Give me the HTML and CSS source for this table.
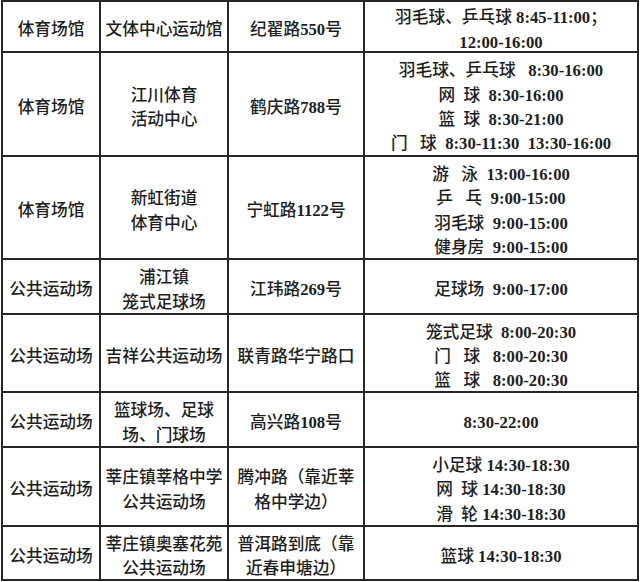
FILE: index.html
```html
<!DOCTYPE html>
<html lang="zh-CN">
<head>
<meta charset="utf-8">
<title>体育场馆开放时间</title>
<link rel="stylesheet" href="styles.css">
</head>
<body>
<table class="venues">
  <colgroup>
    <col class="c-type">
    <col class="c-name">
    <col class="c-addr">
    <col class="c-time">
  </colgroup>
  <tbody>
    <tr class="r1">
      <td><div class="cell">体育场馆</div></td>
      <td><div class="cell">文体中心运动馆</div></td>
      <td><div class="cell">纪翟路<span class="n">550</span>号</div></td>
      <td><div class="cell">羽毛球、乒乓球 <span class="n">8:45-11:00</span>；<br><span class="n">12:00-16:00</span></div></td>
    </tr>
    <tr class="r2">
      <td><div class="cell">体育场馆</div></td>
      <td><div class="cell">江川体育<br>活动中心</div></td>
      <td><div class="cell">鹤庆路<span class="n">788</span>号</div></td>
      <td><div class="cell">羽毛球、乒乓球   <span class="n">8:30-16:00</span><br>网  球  <span class="n">8:30-16:00</span><br>篮  球  <span class="n">8:30-21:00</span><br>门   球  <span class="n">8:30-11:30  13:30-16:00</span></div></td>
    </tr>
    <tr class="r3">
      <td><div class="cell">体育场馆</div></td>
      <td><div class="cell">新虹街道<br>体育中心</div></td>
      <td><div class="cell">宁虹路<span class="n">1122</span>号</div></td>
      <td><div class="cell">游   泳  <span class="n">13:00-16:00</span><br>乒   乓  <span class="n">9:00-15:00</span><br>羽毛球  <span class="n">9:00-15:00</span><br>健身房  <span class="n">9:00-15:00</span></div></td>
    </tr>
    <tr class="r4">
      <td><div class="cell">公共运动场</div></td>
      <td><div class="cell">浦江镇<br>笼式足球场</div></td>
      <td><div class="cell">江玮路<span class="n">269</span>号</div></td>
      <td><div class="cell">足球场  <span class="n">9:00-17:00</span></div></td>
    </tr>
    <tr class="r5">
      <td><div class="cell">公共运动场</div></td>
      <td><div class="cell">吉祥公共运动场</div></td>
      <td><div class="cell">联青路华宁路口</div></td>
      <td><div class="cell">笼式足球  <span class="n">8:00-20:30</span><br>门   球   <span class="n">8:00-20:30</span><br>篮   球   <span class="n">8:00-20:30</span></div></td>
    </tr>
    <tr class="r6">
      <td><div class="cell">公共运动场</div></td>
      <td><div class="cell">篮球场、足球<br>场、门球场</div></td>
      <td><div class="cell">高兴路<span class="n">108</span>号</div></td>
      <td><div class="cell"><span class="n">8:30-22:00</span></div></td>
    </tr>
    <tr class="r7">
      <td><div class="cell">公共运动场</div></td>
      <td><div class="cell">莘庄镇莘格中学<br>公共运动场</div></td>
      <td><div class="cell">腾冲路（靠近莘<br>格中学边）</div></td>
      <td><div class="cell">小足球 <span class="n">14:30-18:30</span><br>网  球 <span class="n">14:30-18:30</span><br>滑  轮 <span class="n">14:30-18:30</span></div></td>
    </tr>
    <tr class="r8">
      <td><div class="cell">公共运动场</div></td>
      <td><div class="cell">莘庄镇奥塞花苑<br>公共运动场</div></td>
      <td><div class="cell">普洱路到底（靠<br>近春申塘边）</div></td>
      <td><div class="cell">篮球 <span class="n">14:30-18:30</span></div></td>
    </tr>
  </tbody>
</table>
</body>
</html>
```

FILE: styles.css
```css
html, body {
  margin: 0;
  padding: 0;
  background: #ffffff;
}

body {
  padding: 0 0 0 1px;
}

.venues {
  border-collapse: collapse;
  table-layout: fixed;
  width: 636px;
  font-family: "Liberation Serif", "Noto Sans CJK SC", serif;
  font-size: 16.7px;
  line-height: 24.3px;
  color: #1e1e1e;
  font-weight: 500;
}

.c-type { width: 98px; }
.c-name { width: 128px; }
.c-addr { width: 136px; }
.c-time { width: 274px; }

.venues td {
  border: 2px solid #262626;
  padding: 0 2px;
  text-align: center;
  vertical-align: middle;
  white-space: pre;
}

/* glyphs sit a little below the optical centre of each cell */
.cell {
  margin: 4px 0 -4px;
}

.n {
  font-weight: 700;
}

.r1 { height: 51px; }
.r2 { height: 104px; }
.r3 { height: 103px; }
.r4 { height: 55px; }
.r5 { height: 78px; }
.r6 { height: 55px; }
.r7 { height: 79px; }
.r8 { height: 54px; }
```
